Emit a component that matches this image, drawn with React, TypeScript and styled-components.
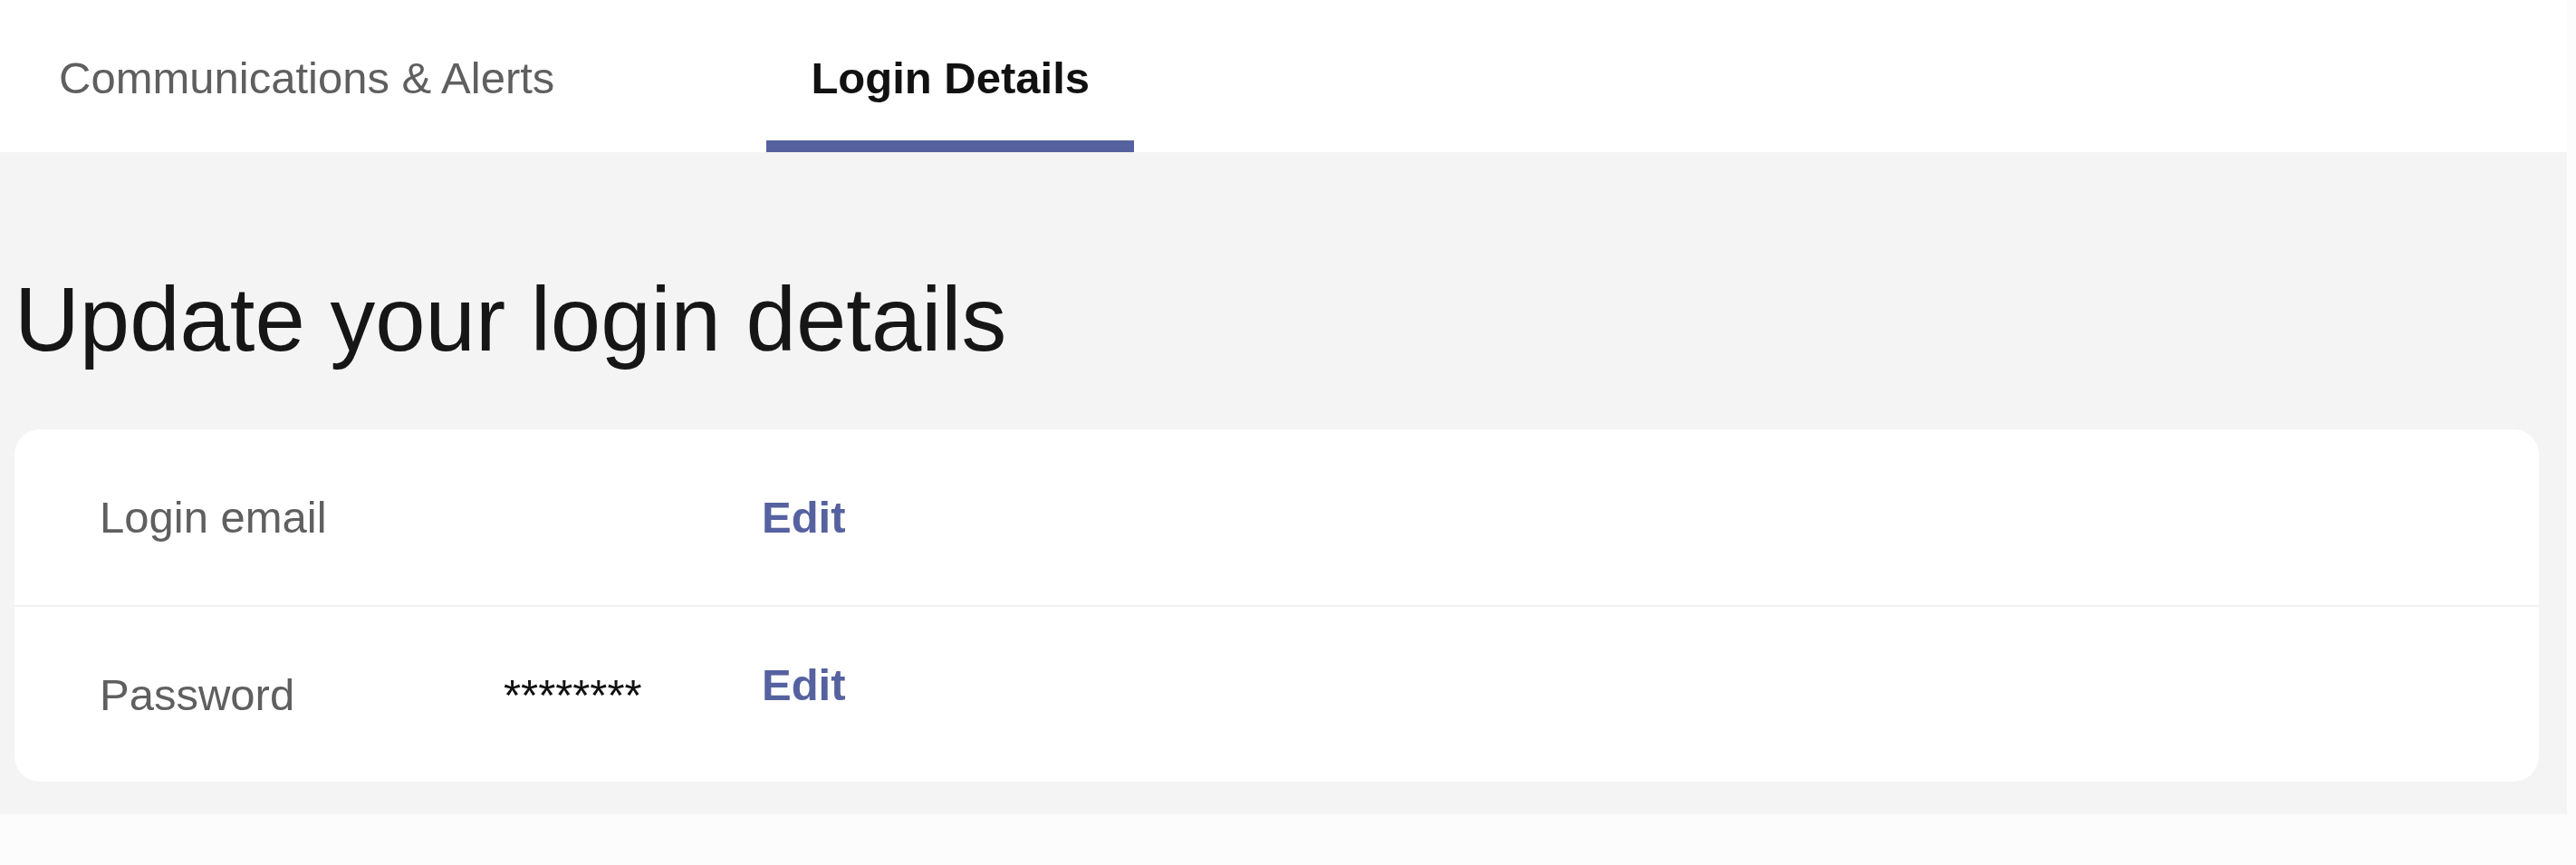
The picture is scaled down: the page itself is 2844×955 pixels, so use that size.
import styled, { createGlobalStyle } from "styled-components";

// Page-wide reset and base font
const GlobalStyle = createGlobalStyle`
    html, body {
        margin: 0;
        padding: 0;
        background-color: #fcfcfc;
        font-family: "Liberation Sans", Arial, sans-serif;
    }
`;

// Outer page, leaves the thin strip on the right
const Page = styled.div`
    width: calc(100% - 10px);
`;

// Tab bar across the top
const TabBar = styled.nav`
    display: flex;
    gap: 185px;
    padding-left: 16px;
    background-color: #ffffff;
`;

// A single tab, active one gets the underline
const Tab = styled.div<{ $active?: boolean }>`
    box-sizing: border-box;
    height: 168px;
    padding: 58px 49px 0;
    font-size: 49px;
    line-height: 1.15;
    font-weight: ${(p) => (p.$active ? 700 : 400)};
    color: ${(p) => (p.$active ? "#111111" : "#5f5f5f")};
    border-bottom: 13px solid ${(p) => (p.$active ? "#5662a0" : "transparent")};
    cursor: pointer;
`;

// Gray content area
const Content = styled.main`
    padding: 128px 31px 36px 16px;
    background-color: #f4f4f4;
`;

// Section heading
const Heading = styled.h1`
    margin: 0 0 64px;
    font-size: 99.5px;
    font-weight: 400;
    line-height: 1.15;
    color: #161616;
`;

// White rounded card holding the rows
const Card = styled.section`
    background-color: #ffffff;
    border-radius: 28px;
    overflow: hidden;
`;

// One row of the card
const Row = styled.div<{ $divider?: boolean }>`
    display: grid;
    grid-template-columns: 446px 285px auto;
    align-items: center;
    box-sizing: border-box;
    height: ${(p) => (p.$divider ? "196px" : "193px")};
    padding-left: 94px;
    border-bottom: ${(p) => (p.$divider ? "2px solid #f2f2f2" : "none")};
    font-size: 49px;
    line-height: 1.15;
`;

// Label on the left of a row
const Label = styled.span`
    color: #5f5f5f;
`;

// Masked value
const Value = styled.span`
    color: #111111;
`;

// Edit link
const EditLink = styled.a<{ $lift?: boolean }>`
    justify-self: start;
    margin-bottom: ${(p) => (p.$lift ? "22px" : "0")};
    font-weight: 700;
    color: #5662a0;
    text-decoration: none;
    cursor: pointer;
`;

export default function App() {
    return (
        <Page>
            <GlobalStyle />
            <TabBar>
                <Tab>Communications &amp; Alerts</Tab>
                <Tab $active>Login Details</Tab>
            </TabBar>
            <Content>
                <Heading>Update your login details</Heading>
                <Card>
                    <Row $divider>
                        <Label>Login email</Label>
                        <Value></Value>
                        <EditLink>Edit</EditLink>
                    </Row>
                    <Row>
                        <Label>Password</Label>
                        <Value>********</Value>
                        <EditLink $lift>Edit</EditLink>
                    </Row>
                </Card>
            </Content>
        </Page>
    );
}
